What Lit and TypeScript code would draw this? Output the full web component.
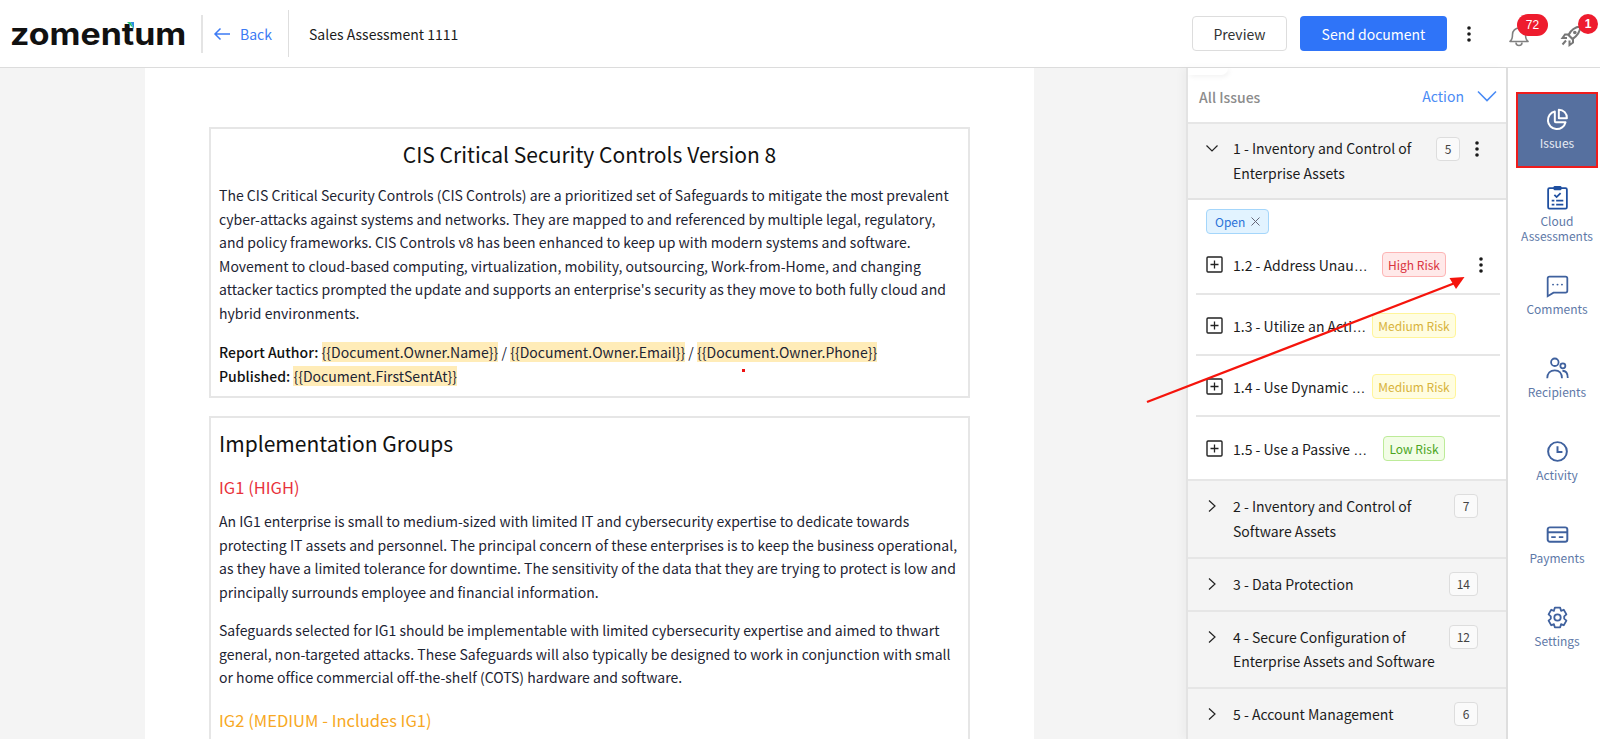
import { LitElement, html, css, svg } from "lit";
import { customElement } from "lit/decorators.js";

const dots = html`<svg class="dots" width="4" height="16" viewBox="0 0 4 16"><circle cx="2" cy="2" r="1.8"/><circle cx="2" cy="8" r="1.8"/><circle cx="2" cy="14" r="1.8"/></svg>`;
const chevDown = html`<svg class="chev" width="14" height="14" viewBox="0 0 14 14"><path d="M1.5 4.500 7 10l5.500-5.500" fill="none" stroke="#222" stroke-width="1.2"/></svg>`;
const chevRight = html`<svg class="chev" width="14" height="14" viewBox="0 0 14 14"><path d="M4 1.500 10 7l-6 5.500" fill="none" stroke="#222" stroke-width="1.2"/></svg>`;
const plus = html`<svg class="plus" width="17" height="17" viewBox="0 0 17 17"><rect x="1" y="1" width="15" height="15" rx="1" fill="none" stroke="#222" stroke-width="1.4"/><path d="M8.500 4.500v8M4.500 8.500h8" stroke="#222" stroke-width="1.300"/></svg>`;

const navIcons: Record<string, unknown> = {
  Issues: svg`<path d="M11 5a10 10 0 1 0 12 12H12a1 1 0 0 1-1-1Z" fill="none" stroke="currentColor" stroke-width="2.200" stroke-linejoin="round"/><path d="M15.500 3a9 9 0 0 1 9 9.500h-9Z" fill="none" stroke="currentColor" stroke-width="2.200" stroke-linejoin="round"/>`,
  Cloud: svg`<rect x="3.500" y="3.500" width="21" height="23" rx="1.500" fill="none" stroke="#1f4fa0" stroke-width="2"/><rect x="9.500" y="1" width="9" height="5" rx="1.500" fill="#1f4fa0"/><path d="m10.500 11 2.500 2.500 4.500-4.500" fill="none" stroke="#1f4fa0" stroke-width="2"/><path d="M7.500 17.500h3M12.500 17.500h8M7.500 22h3M12.500 22h8" stroke="#1f4fa0" stroke-width="2"/>`,
  Comments: svg`<path d="M5 4h18a2 2 0 0 1 2 2v14a2 2 0 0 1-2 2H9.500L3 26V6a2 2 0 0 1 2-2Z" fill="none" stroke="currentColor" stroke-width="2"/><circle cx="9" cy="13" r="1.100" fill="currentColor"/><circle cx="14" cy="13" r="1.100" fill="currentColor"/><circle cx="19" cy="13" r="1.100" fill="currentColor"/>`,
  Recipients: svg`<circle cx="11" cy="7" r="4.200" fill="none" stroke="currentColor" stroke-width="2"/><circle cx="20" cy="11" r="2.800" fill="none" stroke="currentColor" stroke-width="2"/><path d="M2.500 25c0-5.500 3.500-9 8.500-9s8 3.500 8 9" fill="none" stroke="currentColor" stroke-width="2"/><path d="M19.500 16.500c3.500 0 6 2.800 6 8" fill="none" stroke="currentColor" stroke-width="2"/>`,
  Activity: svg`<circle cx="14" cy="14" r="10.500" fill="none" stroke="currentColor" stroke-width="2.200"/><path d="M14 8v6.500h5.500" fill="none" stroke="currentColor" stroke-width="2.200"/>`,
  Payments: svg`<rect x="3" y="6" width="22" height="16" rx="2.500" fill="none" stroke="currentColor" stroke-width="2.200"/><path d="M3 11.500h22" stroke="currentColor" stroke-width="2.200"/><path d="M7 17h5M15.500 17h5" stroke="currentColor" stroke-width="2"/>`,
  Settings: svg`<path d="M11 3h6l1 3.500 3-1.200 3 5.200-2.500 2.200v2.600l2.500 2.200-3 5.200-3-1.200L17 25h-6l-1-3.500-3 1.200-3-5.200 2.500-2.200v-2.600L4 10.500l3-5.200 3 1.200Z" fill="none" stroke="currentColor" stroke-width="2" stroke-linejoin="round"/><circle cx="14" cy="14" r="3.600" fill="none" stroke="currentColor" stroke-width="2"/>`,
};

const navItems = [
  { key: "Issues", label: "Issues", cls: "active" },
  { key: "Cloud", label: "Cloud Assessments", cls: "cloud" },
  { key: "Comments", label: "Comments", cls: "first" },
  { key: "Recipients", label: "Recipients", cls: "" },
  { key: "Activity", label: "Activity", cls: "" },
  { key: "Payments", label: "Payments", cls: "" },
  { key: "Settings", label: "Settings", cls: "" },
];

const rows = [
  { t: "1.2 - Address Unau", r: "High Risk", c: "high", d: true },
  { t: "1.3 - Utilize an Acti", r: "Medium Risk", c: "med", d: false },
  { t: "1.4 - Use Dynamic ", r: "Medium Risk", c: "med", d: false },
  { t: "1.5 - Use a Passive ", r: "Low Risk", c: "low", d: false },
];

const groups = [
  { l: ["2 - Inventory and Control of", "Software Assets"], n: 7 },
  { l: ["3 - Data Protection"], n: 14 },
  { l: ["4 - Secure Configuration of", "Enterprise Assets and Software"], n: 12 },
  { l: ["5 - Account Management"], n: 6 },
];

@customElement("app-root")
export class AppRoot extends LitElement {
  static styles = css`
    :host {
      display: block; position: relative; height: 739px; overflow: hidden; background: #fff; color: #1c1c1c;
      font-family: "Noto Sans CJK SC", "Noto Sans", sans-serif; font-size: 14px;
    }
    * { box-sizing: border-box; }
    header { height: 68px; border-bottom: 1px solid #dcdcdc; display: flex; align-items: center; }
    .logo { position: relative; width: 203px; padding-left: 10px; font: 700 30px/1 Inter, sans-serif; color: #111; height: 38px; display: flex; align-items: center; border-right: 2px solid #e4e4e4; }
    .logo span { display: inline-block; transform: scaleX(1.13); transform-origin: left center; }
    .logo svg { position: absolute; left: 127px; top: 7px; }
    .back { width: 86px; height: 47px; padding-left: 10px; display: flex; align-items: center; gap: 9px; color: #3d7bf4; border-right: 1px solid #dedede; }
    .title { margin-left: 20px; }
    .spacer { flex: 1; }
    .btn { height: 35px; border-radius: 4px; display: flex; align-items: center; justify-content: center; }
    .preview { width: 95px; border: 1px solid #dddddd; color: #333; }
    .send { width: 147px; margin-left: 13px; background: #2f74f8; color: #fff; }
    .hdots { margin-left: 20px; width: 4px; display: flex; }
    .dots { fill: #1a1a1a; display: block; flex: none; }
    .ic { position: relative; width: 24px; height: 24px; }
    .ic svg { display: block; margin-top: 1px; }
    .bell { margin-left: 36px; }
    .rocket { margin-left: 29px; margin-right: 16px; }
    .badge { position: absolute; background: #ee1c2e; color: #fff; font: 12px/1 "Liberation Sans", sans-serif; display: flex; align-items: center; justify-content: center; }
    .bell .badge { left: 10px; top: -8px; width: 31px; height: 22px; border-radius: 11px; }
    .rocket .badge { left: 18px; top: -8px; width: 20px; height: 20px; border-radius: 50%; font-weight: 700; }
    main { display: flex; height: 671px; }
    .doc { flex: 1; min-width: 0; background: #f4f4f4; padding-left: 145px; }
    .page { width: 889px; height: 100%; background: #fff; padding: 59px 64px 0 64px; overflow: hidden; }
    .card { border: 2px solid #e6e6e6; padding: 0 8px; line-height: 23.500px; color: #1d2433; letter-spacing: 0.02px; }
    .card + .card { margin-top: 18px; padding-bottom: 60px; }
    .card h1 { margin: 0; font-size: 21px; font-weight: 400; text-align: center; padding-top: 9px; line-height: 32px; color: #111; }
    .card h2 { margin: 0; font-size: 21px; font-weight: 400; padding-top: 9px; line-height: 32px; color: #111; }
    .card h3 { margin: 0; font-size: 16.500px; font-weight: 400; line-height: 26px; }
    .red { color: #e8323c; padding-top: 15px; }
    .amber { color: #f7a823; padding-top: 17px; }
    p { margin: 0; }
    .p1 { padding-top: 14px; }
    .p2 { padding-top: 16px; padding-bottom: 8px; }
    .g1 { padding-top: 10px; }
    .g2 { padding-top: 15px; }
    mark { background: #ffecb8; color: inherit; }
    b { font-weight: 500; color: #111; }
    .speck { position: absolute; left: 742px; top: 369px; width: 3px; height: 3px; background: #ee1111; }
    .panel { width: 320px; flex: none; border-left: 2px solid #e3e3e3; display: flex; flex-direction: column; overflow: hidden; box-shadow: -4px 0 8px rgba(0,0,0,0.03); }
    .ptop { position: relative; height: 54px; flex: none; display: flex; align-items: center; padding: 4px 9px 0 11px; }
    .ptop::before { content: ""; position: absolute; left: 0; top: 0; width: 40px; height: 7px; border-bottom-right-radius: 10px; box-shadow: 2px 2px 5px rgba(0,0,0,0.05); }
    .ptop .all { color: #8c8c8c; font-weight: 500; flex: 1; }
    .ptop .act { color: #4a8bf5; margin-right: 13px; margin-top: -3px; }
    .ptop svg { margin-top: -3px; }
    .grp { background: #f4f4f4; border-top: 2px solid #e6e6e6; display: flex; padding: 13px 28px 13.500px 17px; line-height: 24.500px; color: #1c1c1c; flex: none; }
    .grp .chev { margin-top: 5px; flex: none; }
    .grp .txt { flex: 1; margin-left: 14px; }
    .count { flex: none; min-width: 24px; height: 24px; padding: 0 7px; border: 1px solid #ddd; border-radius: 4px; background: #fafafa; font-size: 12px; line-height: 1; color: #444; display: flex; align-items: center; justify-content: center; }
    .grp1 { padding: 12px 27px 13px 17px; }
    .grp1 .dots { margin-left: 15px; margin-top: 5px; }
    .grp1 .count { margin-top: 1px; }
    .body { flex: none; padding: 9px 6px 0 8px; height: 281px; border-top: 2px solid #e3e3e3; background: #fff; }
    .open { display: inline-flex; align-items: center; gap: 6px; height: 25px; padding: 0 8px; margin-left: 10px; background: #e2f3ff; border: 1px solid #a4d6fb; border-radius: 4px; color: #2a72d8; font-size: 12px; line-height: 1; }
    .row { height: 61px; display: flex; align-items: center; border-bottom: 2px solid #e6e6e6; padding-left: 10px; padding-top: 2px; }
    .row:first-of-type { margin-top: 1px; padding-top: 0; padding-bottom: 2px; }
    .row:last-child { border-bottom: none; }
    .row .name { width: 135px; margin-left: 10px; white-space: pre; flex: none; }
    .ell { font-family: "Liberation Sans", sans-serif; }
    .row .plus { flex: none; }
    .rwrap { width: 92px; flex: none; display: flex; justify-content: center; }
    .tag { height: 25px; padding: 0 5px; border-radius: 4px; border: 1px solid; font-size: 12px; line-height: 1; display: flex; align-items: center; white-space: nowrap; }
    .high { background: #ffe9e9; border-color: #fdb5b5; color: #d9343f; }
    .med { background: #fffde0; border-color: #fff59a; color: #d8b33a; }
    .low { background: #f2fde6; border-color: #bdeb99; color: #4ca51e; }
    .row .dots { margin-left: 19px; }
    nav { width: 94px; flex: none; border-left: 2px solid #dedede; display: flex; flex-direction: column; align-items: center; }
    .item { width: 82px; margin-left: 6px; margin-top: 38px; display: flex; flex-direction: column; align-items: center; font-size: 12px; line-height: 15px; text-align: center; color: #5e79a8; }
    .item svg { color: #3f619e; display: block; flex: none; width: 25px; height: 25px; margin: 1.500px 0; }
    .item.active { height: 76px; margin-top: 24px; background: #56709f; border: 2px solid #ee1c1c; color: #e6ebf3; padding-top: 11px; }
    .item.active svg { color: #fff; }
    .item.cloud { margin-top: 15px; }
    .item.first { margin-top: 28px; }
    .item .lbl { margin-top: 2px; }
    .arrow { position: absolute; left: 1140px; top: 270px; pointer-events: none; }
  `;

  render() {
    return html`
      <header>
        <div class="logo"><span>zomentum</span><svg width="7" height="7" viewBox="0 0 7 7"><path d="M0 0h3.500L7 7Z" fill="#27c26a"/><path d="M3.500 0H7v7Z" fill="#2b8fe0"/></svg></div>
        <div class="back">
          <svg width="18" height="14" viewBox="0 0 18 14"><path d="M17 7H2M7.500 1.500 2 7l5.500 5.500" fill="none" stroke="#3d7bf4" stroke-width="1.500"/></svg>
          Back
        </div>
        <div class="title">Sales Assessment 1111</div>
        <div class="spacer"></div>
        <div class="btn preview">Preview</div>
        <div class="btn send">Send document</div>
        <div class="hdots">${dots}</div>
        <div class="ic bell">
          <svg width="24" height="24" viewBox="0 0 24 24"><path d="M3 18.500c2-1.500 2.500-3.500 2.500-7a6.500 6.500 0 0 1 13 0c0 3.500.5 5.500 2.500 7Z" fill="none" stroke="#808080" stroke-width="1.600" stroke-linejoin="round"/><path d="M9 19.500a3 3 0 0 0 6 0" fill="none" stroke="#808080" stroke-width="1.600"/></svg>
          <span class="badge">72</span>
        </div>
        <div class="ic rocket">
          <svg width="24" height="24" viewBox="0 0 24 24"><path d="M8.500 12c2.500-5 6.500-8 12-8.500C20 9 17 13 12.500 16Z" fill="none" stroke="#777" stroke-width="2.200" stroke-linejoin="round"/><circle cx="14.800" cy="9.500" r="1.800" fill="#777"/><path d="M8.500 11.500H5L2.500 15H7M13 16v3.500L9.500 22v-4.500M6 17.500l-3.500 4" fill="none" stroke="#777" stroke-width="2"/></svg>
          <span class="badge">1</span>
        </div>
      </header>
      <main>
        <div class="doc">
          <div class="page">
            <section class="card">
              <h1>CIS Critical Security Controls Version 8</h1>
              <p class="p1">The CIS Critical Security Controls (CIS Controls) are a prioritized set of Safeguards to mitigate the most prevalent cyber-attacks against systems and networks. They are mapped to and referenced by multiple legal, regulatory, and policy frameworks. CIS Controls v8 has been enhanced to keep up with modern systems and software. Movement to cloud-based computing, virtualization, mobility, outsourcing, Work-from-Home, and changing attacker tactics prompted the update and supports an enterprise's security as they move to both fully cloud and hybrid environments.</p>
              <p class="p2"><b>Report Author:</b> <mark>{{Document.Owner.Name}}</mark> / <mark>{{Document.Owner.Email}}</mark> / <mark>{{Document.Owner.Phone}}</mark><br /><b>Published:</b> <mark>{{Document.FirstSentAt}}</mark></p>
            </section>
            <section class="card">
              <h2>Implementation Groups</h2>
              <h3 class="red">IG1 (HIGH)</h3>
              <p class="g1">An IG1 enterprise is small to medium-sized with limited IT and cybersecurity expertise to dedicate towards protecting IT assets and personnel. The principal concern of these enterprises is to keep the business operational, as they have a limited tolerance for downtime. The sensitivity of the data that they are trying to protect is low and principally surrounds employee and financial information.</p>
              <p class="g2">Safeguards selected for IG1 should be implementable with limited cybersecurity expertise and aimed to thwart general, non-targeted attacks. These Safeguards will also typically be designed to work in conjunction with small or home office commercial off-the-shelf (COTS) hardware and software.</p>
              <h3 class="amber">IG2 (MEDIUM - Includes IG1)</h3>
            </section>
          </div>
        </div>
        <aside class="panel">
          <div class="ptop">
            <span class="all">All Issues</span>
            <span class="act">Action</span>
            <svg width="20" height="12" viewBox="0 0 20 12"><path d="M1 1.500 10 10.500 19 1.500" fill="none" stroke="#4a8bf5" stroke-width="1.600"/></svg>
          </div>
          <div class="grp grp1">
            ${chevDown}
            <div class="txt">1 - Inventory and Control of<br />Enterprise Assets</div>
            <div class="count">5</div>
            ${dots}
          </div>
          <div class="body">
            <div class="open">Open <svg width="9" height="9" viewBox="0 0 9 9"><path d="m.5.5 8 8M8.500.5l-8 8" stroke="#667" stroke-width="1"/></svg></div>
            ${rows.map(
              (r) => html`<div class="row">
                ${plus}
                <span class="name">${r.t}<span class="ell">…</span></span>
                <div class="rwrap"><span class="tag ${r.c}">${r.r}</span></div>
                ${r.d ? dots : ""}
              </div>`
            )}
          </div>
          ${groups.map(
            (g) => html`<div class="grp">
              ${chevRight}
              <div class="txt">${g.l.map((x, i) => (i ? html`<br />${x}` : x))}</div>
              <div class="count">${g.n}</div>
            </div>`
          )}
        </aside>
        <nav>
          ${navItems.map(
            (n) => html`<div class="item ${n.cls}">
              <svg viewBox="0 0 28 28">${navIcons[n.key]}</svg>
              <span class="lbl">${n.label}</span>
            </div>`
          )}
        </nav>
      </main>
      <div class="speck"></div>
      <svg class="arrow" width="340" height="140" viewBox="0 0 340 140"><path d="M7 132 L315 13" stroke="#f5140c" stroke-width="2.400"/><path d="M324.500 7 L309.500 8 L316 19Z" fill="#f5140c"/></svg>
    `;
  }
}
